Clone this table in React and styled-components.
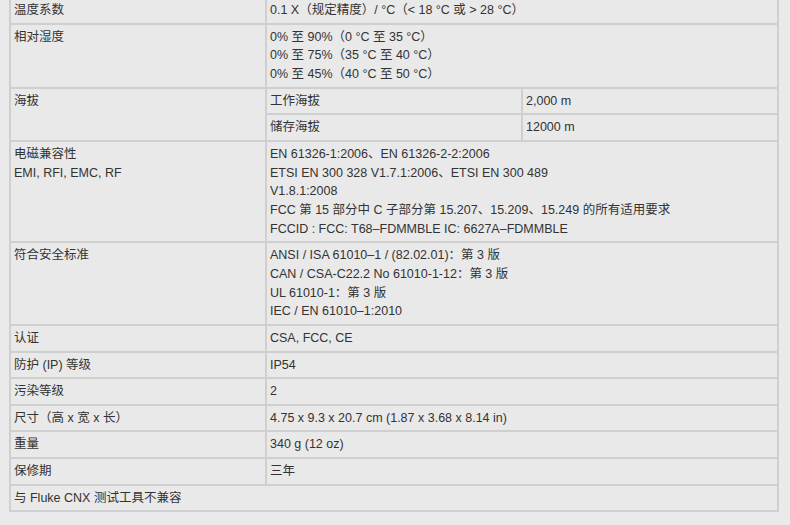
import React from 'react'
import styled, { createGlobalStyle } from 'styled-components'

const Global = createGlobalStyle`
    html, body {
        margin: 0;
        padding: 0;
        background: #eaeaea;
    }
    body {
        font-family: "Liberation Sans", Arial, "Noto Sans CJK SC", sans-serif;
        font-size: 12.5px;
        color: #333333;
    }
`

const Page = styled.div`
    padding: 0 0 0 9px;
    margin-top: -4px;
`

const SpecTable = styled.table`
    border-collapse: collapse;
    table-layout: fixed;
    background: #e9e9e9;
`

const Col = styled.col`
    width: 256px;
`

const Cell = styled.td`
    border: 2px solid #cfcfcf;
    padding: 3px 3px 3px;
    line-height: 18.65px;
    vertical-align: top;
    text-align: left;
`

const Line = styled.div`
    white-space: nowrap;
`

const specs = [
    { label: '温度系数', value: ['0.1 X（规定精度）/ °C（< 18 °C 或 > 28 °C）'] },
    { label: '相对湿度', value: ['0% 至 90%（0 °C 至 35 °C）', '0% 至 75%（35 °C 至 40 °C）', '0% 至 45%（40 °C 至 50 °C）'] },
    { label: '海拔', sub: [['工作海拔', '2,000 m'], ['储存海拔', '12000 m']] },
    {
        label: ['电磁兼容性', 'EMI, RFI, EMC, RF'],
        value: [
            'EN 61326-1:2006、EN 61326-2-2:2006',
            'ETSI EN 300 328 V1.7.1:2006、ETSI EN 300 489',
            'V1.8.1:2008',
            'FCC 第 15 部分中 C 子部分第 15.207、15.209、15.249 的所有适用要求',
            'FCCID : FCC: T68–FDMMBLE IC: 6627A–FDMMBLE',
        ],
    },
    {
        label: '符合安全标准',
        value: [
            'ANSI / ISA 61010–1 / (82.02.01)：第 3 版',
            'CAN / CSA-C22.2 No 61010-1-12：第 3 版',
            'UL 61010-1：第 3 版',
            'IEC / EN 61010–1:2010',
        ],
    },
    { label: '认证', value: ['CSA, FCC, CE'] },
    { label: '防护 (IP) 等级', value: ['IP54'] },
    { label: '污染等级', value: ['2'] },
    { label: '尺寸（高 x 宽 x 长）', value: ['4.75 x 9.3 x 20.7 cm (1.87 x 3.68 x 8.14 in)'] },
    { label: '重量', value: ['340 g (12 oz)'] },
    { label: '保修期', value: ['三年'] },
]

const lines = (v) => [].concat(v).map((t, i) => <Line key={i}>{t}</Line>)

export default function App() {
    return (
        <Page>
            <Global />
            <SpecTable>
                <colgroup>
                    <Col />
                    <Col />
                    <Col />
                </colgroup>
                <tbody>
                    {specs.map((row, i) =>
                        row.sub ? (
                            row.sub.map((s, j) => (
                                <tr key={i + '-' + j}>
                                    {j === 0 && <Cell rowSpan={row.sub.length}>{lines(row.label)}</Cell>}
                                    <Cell>{s[0]}</Cell>
                                    <Cell>{s[1]}</Cell>
                                </tr>
                            ))
                        ) : (
                            <tr key={i}>
                                <Cell>{lines(row.label)}</Cell>
                                <Cell colSpan={2}>{lines(row.value)}</Cell>
                            </tr>
                        )
                    )}
                    <tr>
                        <Cell colSpan={3}>与 Fluke CNX 测试工具不兼容</Cell>
                    </tr>
                </tbody>
            </SpecTable>
        </Page>
    )
}
